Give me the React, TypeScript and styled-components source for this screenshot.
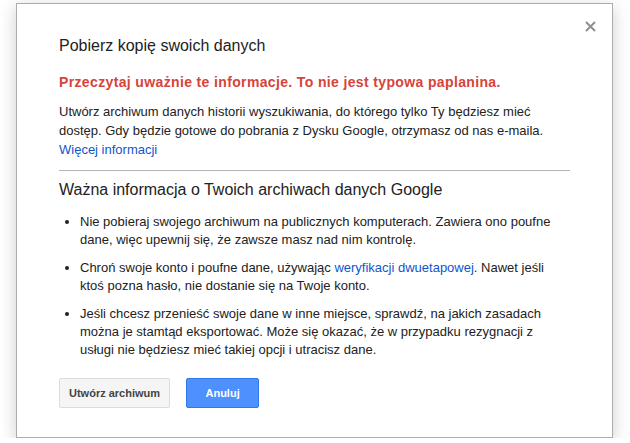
import * as React from "react";
import styled, { createGlobalStyle } from "styled-components";

const GlobalStyle = createGlobalStyle`
  html, body {
    margin: 0;
    padding: 0;
    background: #ffffff;
  }
  body {
    font-family: "Liberation Sans", Arial, sans-serif;
    color: #222222;
  }
`;

const Page = styled.div`
  padding: 3px 0 0 16px;
`;

const Dialog = styled.div`
  position: relative;
  box-sizing: border-box;
  width: 597px;
  padding: 30px 42px 29px;
  background: #ffffff;
  border: 1px solid #acacac;
  box-shadow: 0 4px 16px rgba(0, 0, 0, 0.2);
`;

const Close = styled.button`
  position: absolute;
  top: 17px;
  right: 16px;
  width: 11px;
  height: 11px;
  padding: 0;
  border: 0;
  background: none;
  cursor: pointer;
  display: flex;
`;

const Title = styled.h1`
  margin: 0;
  font-size: 16px;
  line-height: 24px;
  font-weight: normal;
  color: #222222;
`;

const Warning = styled.p`
  margin: 14px 0 0;
  font-size: 14px;
  line-height: 20px;
  font-weight: bold;
  letter-spacing: 0.36px;
  color: #d6443a;
`;

const Intro = styled.p`
  margin: 10px 0 0;
  font-size: 13px;
  line-height: 19px;
`;

const Link = styled.a`
  color: #15c;
  text-decoration: none;
`;

const Separator = styled.hr`
  margin: 11px 0 0;
  border: 0;
  border-top: 1px solid #b5b5b5;
  height: 0;
`;

const SectionTitle = styled.h2`
  margin: 8px 0 0;
  font-size: 16px;
  line-height: 22px;
  font-weight: normal;
  color: #222222;
`;

const List = styled.ul`
  margin: 12px 0 0;
  padding: 0 0 0 21px;
  font-size: 13px;
  line-height: 18px;
`;

const Item = styled.li`
  margin-top: 10px;
  &:first-child {
    margin-top: 0;
  }
`;

const Actions = styled.div`
  display: flex;
  gap: 16px;
  margin-top: 19px;
`;

const Button = styled.button<{ $primary?: boolean }>`
  box-sizing: border-box;
  height: 30px;
  min-width: ${(p) => (p.$primary ? "73px" : "54px")};
  padding: 0 9px;
  border-radius: 2px;
  border: 1px solid ${(p) => (p.$primary ? "#3079ed" : "#dcdcdc")};
  background: ${(p) => (p.$primary ? "#4d90fe" : "#f5f5f5")};
  color: ${(p) => (p.$primary ? "#ffffff" : "#444444")};
  font-family: "Liberation Sans", Arial, sans-serif;
  font-size: 11px;
  font-weight: bold;
  cursor: pointer;
`;

export default function App() {
  return (
    <>
      <GlobalStyle />
      <Page>
        <Dialog>
          <Close aria-label="Zamknij">
            <svg width="11" height="11" viewBox="0 0 11 11">
              <path d="M1 1L10 10M10 1L1 10" stroke="#8f8f8f" strokeWidth="2" />
            </svg>
          </Close>
          <Title>Pobierz kopię swoich danych</Title>
          <Warning>Przeczytaj uważnie te informacje. To nie jest typowa paplanina.</Warning>
          <Intro>
            Utwórz archiwum danych historii wyszukiwania, do którego tylko Ty będziesz mieć
            dostęp. Gdy będzie gotowe do pobrania z Dysku Google, otrzymasz od nas e-maila.
            <br />
            <Link href="#">Więcej informacji</Link>
          </Intro>
          <Separator />
          <SectionTitle>Ważna informacja o Twoich archiwach danych Google</SectionTitle>
          <List>
            <Item>
              Nie pobieraj swojego archiwum na publicznych komputerach. Zawiera ono poufne
              dane, więc upewnij się, że zawsze masz nad nim kontrolę.
            </Item>
            <Item>
              Chroń swoje konto i poufne dane, używając{" "}
              <Link href="#">weryfikacji dwuetapowej</Link>. Nawet jeśli ktoś pozna hasło, nie
              dostanie się na Twoje konto.
            </Item>
            <Item>
              Jeśli chcesz przenieść swoje dane w inne miejsce, sprawdź, na jakich zasadach
              można je stamtąd eksportować. Może się okazać, że w przypadku rezygnacji z
              usługi nie będziesz mieć takiej opcji i utracisz dane.
            </Item>
          </List>
          <Actions>
            <Button>Utwórz archiwum</Button>
            <Button $primary>Anuluj</Button>
          </Actions>
        </Dialog>
      </Page>
    </>
  );
}
